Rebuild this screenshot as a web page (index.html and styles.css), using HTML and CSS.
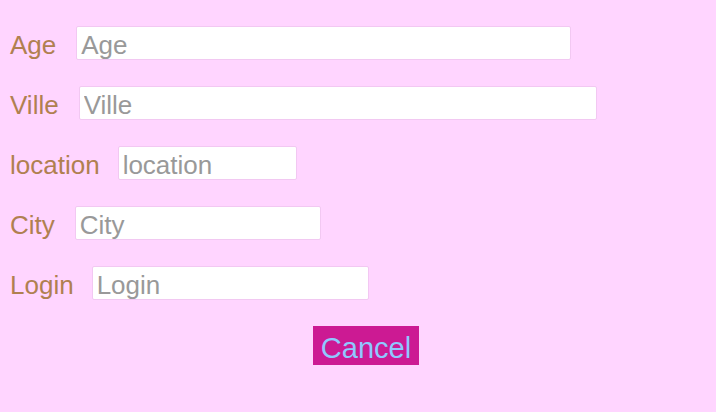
FILE: index.html
```html
<!DOCTYPE html>
<html>
<head>
<meta charset="utf-8">
<link rel="stylesheet" href="styles.css">
</head>
<body>
<form class="form">
  <div class="row"><label class="label">Age</label><input class="field w-age" placeholder="Age"></div>
  <div class="row"><label class="label">Ville</label><input class="field w-ville" placeholder="Ville"></div>
  <div class="row row-tight"><label class="label">location</label><input class="field w-location" placeholder="location"></div>
  <div class="row"><label class="label">City</label><input class="field w-city" placeholder="City"></div>
  <div class="row row-tight"><label class="label">Login</label><input class="field w-login" placeholder="Login"></div>
  <div class="actions"><button type="button" class="cancel">Cancel</button></div>
</form>
</body>
</html>
```
FILE: styles.css
```css
html, body {
  margin: 0;
  padding: 0;
  background: #ffd5ff;
  font-family: "Liberation Sans", Arial, sans-serif;
}
.form {
  padding: 26px 0 0 10px;
  display: flex;
  flex-direction: column;
  gap: 26px;
}
.row {
  display: flex;
  align-items: baseline;
  gap: 20px;
  height: 34px;
}
.row-tight {
  gap: 18px;
}
.label {
  font-size: 26px;
  color: #b08050;
}
.field {
  box-sizing: border-box;
  height: 34px;
  border: 1px solid #f2c8f2;
  border-radius: 2px;
  background: #fff;
  font-family: "Liberation Sans", Arial, sans-serif;
  font-size: 26px;
  padding: 5px 4px 0;
  color: #333;
  outline: none;
}
.field::placeholder { color: #999; }
.w-age { width: 495px; }
.w-ville { width: 518px; }
.w-location { width: 179px; }
.w-city { width: 246px; }
.w-login { width: 277px; }
.actions {
  padding-left: 303px;
}
.cancel {
  border: none;
  background: #cc1a93;
  color: #8fc8ff;
  font-family: "Liberation Sans", Arial, sans-serif;
  font-size: 29px;
  width: 106px;
  height: 39px;
  padding: 6px 0 0;
  cursor: pointer;
}
```
